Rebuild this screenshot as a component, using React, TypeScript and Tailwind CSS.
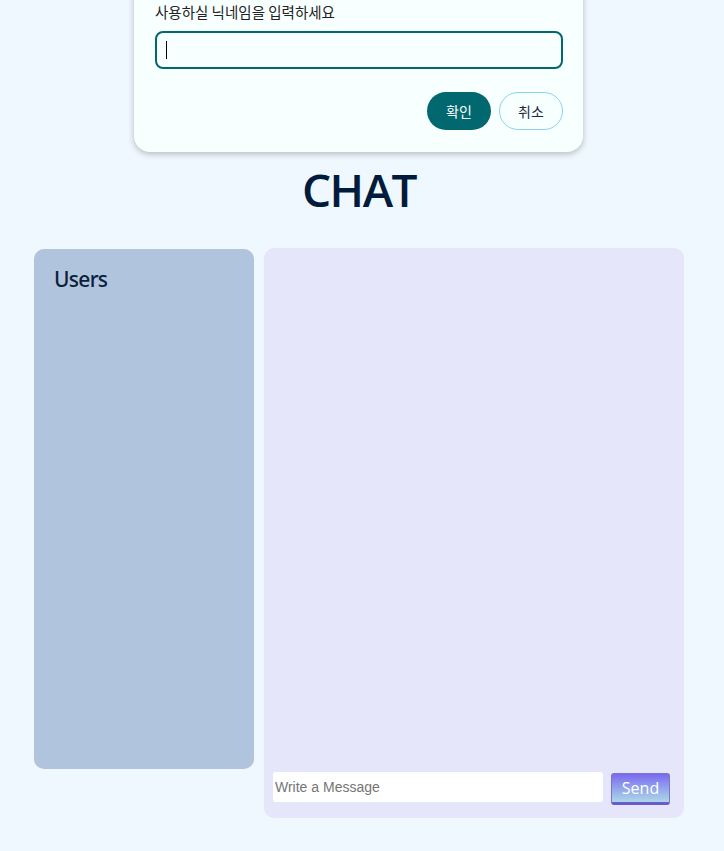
export default function App() {
  return (
    <div className="relative min-h-[851px] bg-[#f0f8ff] font-['Noto_Sans','Noto_Sans_CJK_KR',sans-serif]">
      {/* nickname dialog, slid partly off the top */}
      <div className="absolute left-[134px] top-[-20px] w-[449px] rounded-2xl bg-[#f8ffff] pb-[22px] pl-[21px] pr-[20px] pt-[22px] shadow-[0_2px_6px_rgba(0,0,0,0.25)]">
        <p className="text-[14.5px] leading-[20px] text-[#222] font-['Noto_Sans_CJK_KR',sans-serif]">
          사용하실 닉네임을 입력하세요
        </p>
        <div className="mt-[9px] flex h-[38px] items-center rounded-lg border-2 border-[#00686e] bg-[#f8ffff] pl-[9px]">
          <span className="h-[18px] w-px bg-black" />
        </div>
        <div className="mt-[23px] flex justify-end gap-2">
          <button className="h-[38px] w-[64px] rounded-full bg-[#00686e] text-[14px] text-white font-['Noto_Sans_CJK_KR',sans-serif]">
            확인
          </button>
          <button className="h-[38px] w-[64px] rounded-full border border-[#86d6e6] bg-[#f8ffff] text-[14px] text-[#1f2937] font-['Noto_Sans_CJK_KR',sans-serif]">
            취소
          </button>
        </div>
      </div>

      <div className="pt-[159px]">
        <h1 className="pr-[6px] text-center text-[46px] font-semibold leading-[60px] tracking-[-1.5px] text-[#001b3c] font-['Open_Sans',sans-serif]">
          CHAT
        </h1>

        <div className="mt-[29px] flex items-start gap-[10px] pl-[34px]">
          <div className="mt-px h-[520px] w-[220px] rounded-[10px] bg-[#b0c4de] px-5 pt-[15px]">
            <h2 className="text-[21px] font-medium leading-[30px] tracking-[-0.7px] text-[#0c1f3a]">Users</h2>
          </div>

          <div className="flex h-[570px] w-[420px] flex-col justify-end rounded-[10px] bg-[#e6e6fa] pb-[13px] pl-[9px] pr-[14px]">
            <div className="flex items-start gap-2">
              <input
                placeholder="Write a Message"
                className="h-[30px] flex-1 rounded-[3px] bg-white px-[2px] text-[14px] text-black placeholder:text-[#757575] outline-none font-['Liberation_Sans',sans-serif]"
              />
              <button className="mt-px h-[32px] w-[59px] rounded-[3px] border border-[#7a76c8] border-b-[3px] border-b-[#6a5acd] bg-gradient-to-b from-[#7b68ee] to-[#add8e6] text-[16px] text-white font-['Open_Sans',sans-serif]">
                Send
              </button>
            </div>
          </div>
        </div>
      </div>
    </div>
  );
}
